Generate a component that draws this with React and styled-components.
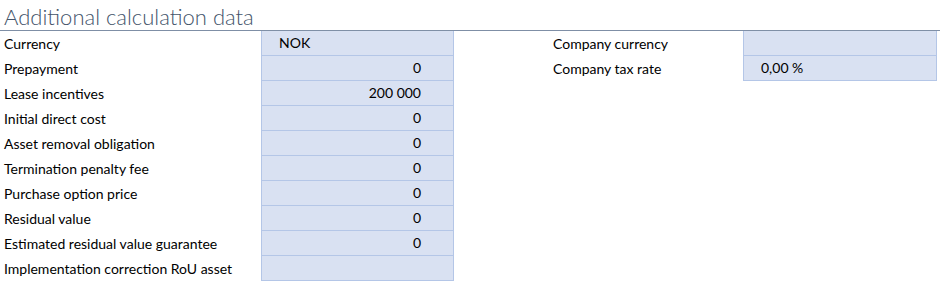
import React from 'react';
import styled, { createGlobalStyle } from 'styled-components';

const GlobalStyle = createGlobalStyle`
  body {
    margin: 0;
    background: #ffffff;
    font-family: Lato, "Open Sans", sans-serif;
  }
`;

const Sheet = styled.div`
  width: 940px;
  height: 286px;
  overflow: hidden;
  background: #ffffff;
`;

const Title = styled.h1`
  margin: 0;
  height: 30px;
  padding-left: 4px;
  font-family: Lato, sans-serif;
  font-weight: 300;
  font-size: 22px;
  line-height: 34px;
  color: #44546a;
  border-bottom: 1px solid #7f8fa6;
`;

const Columns = styled.div`
  display: flex;
`;

const Table = styled.div`
  display: grid;
  grid-template-columns: ${(p) => p.labelWidth}px ${(p) => p.valueWidth}px;
  grid-auto-rows: 25px;
  margin-left: ${(p) => p.offset || 0}px;
`;

const Label = styled.div`
  padding-left: 4px;
  font-size: 14px;
  line-height: 25px;
  color: #000000;
  white-space: nowrap;
`;

const Value = styled.div`
  background: #d9e1f2;
  border: 1px solid #b4c6e7;
  border-top: none;
  padding: 0 ${(p) => (p.align === 'right' ? 32 : 0)}px 0 ${(p) => (p.align === 'right' ? 0 : 17)}px;
  text-align: ${(p) => p.align || 'left'};
  font-size: 14px;
  line-height: 24px;
  color: #000000;
`;

const leftRows = [
  ['Currency', 'NOK', 'left'],
  ['Prepayment', '0', 'right'],
  ['Lease incentives', '200 000', 'right'],
  ['Initial direct cost', '0', 'right'],
  ['Asset removal obligation', '0', 'right'],
  ['Termination penalty fee', '0', 'right'],
  ['Purchase option price', '0', 'right'],
  ['Residual value', '0', 'right'],
  ['Estimated residual value guarantee', '0', 'right'],
  ['Implementation correction RoU asset', '', 'right'],
];

const rightRows = [
  ['Company currency', '', 'left'],
  ['Company tax rate', '0,00 %', 'left'],
];

const Rows = ({ rows }) =>
  rows.map(([label, value, align]) => (
    <React.Fragment key={label}>
      <Label>{label}</Label>
      <Value align={align}>{value}</Value>
    </React.Fragment>
  ));

export default function App() {
  return (
    <Sheet>
      <GlobalStyle />
      <Title>Additional calculation data</Title>
      <Columns>
        <Table labelWidth={261} valueWidth={193}>
          <Rows rows={leftRows} />
        </Table>
        <Table labelWidth={194} valueWidth={194} offset={95}>
          <Rows rows={rightRows} />
        </Table>
      </Columns>
    </Sheet>
  );
}
